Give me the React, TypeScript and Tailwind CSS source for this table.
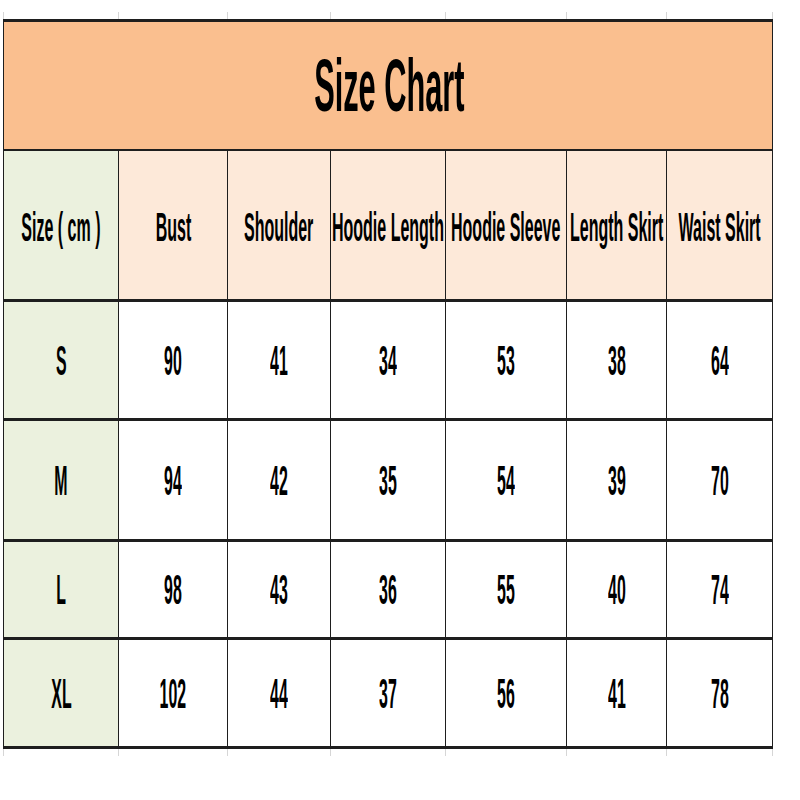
import React from "react";

const cols = "grid grid-cols-[115px_109px_103px_115px_121px_100px_106px]";
const font = { fontFamily: '"Liberation Sans", Arial, sans-serif' };

const headers = ["Bust", "Shoulder", "Hoodie Length", "Hoodie Sleeve", "Length Skirt", "Waist Skirt"];
const rows: { size: string; vals: string[]; h: string }[] = [
  { size: "S", vals: ["90", "41", "34", "53", "38", "64"], h: "h-[119px]" },
  { size: "M", vals: ["94", "42", "35", "54", "39", "70"], h: "h-[121px]" },
  { size: "L", vals: ["98", "43", "36", "55", "40", "74"], h: "h-[98px]" },
  { size: "XL", vals: ["102", "44", "37", "56", "41", "78"], h: "h-[109px]" },
];

function Ghost() {
  return (
    <div className={`${cols} h-[7px] ml-[3px] border-l border-[#d6d6d6] w-[770px]`}>
      {Array.from({ length: 7 }).map((_, i) => (
        <div key={i} className="border-r border-[#d6d6d6]" />
      ))}
    </div>
  );
}

function HeadText({ children }: { children: React.ReactNode }) {
  return (
    <span className="shrink-0 whitespace-nowrap inline-block text-[40px] font-bold leading-none text-black scale-x-[0.4]">
      {children}
    </span>
  );
}

function BodyText({ children }: { children: React.ReactNode }) {
  return (
    <span className="shrink-0 whitespace-nowrap inline-block text-[43px] font-bold leading-none text-black scale-x-[0.37]">
      {children}
    </span>
  );
}

export default function App() {
  return (
    <div className="w-[800px] h-[800px] bg-white pt-[12px]" style={font}>
      <Ghost />
      <div className="ml-[3px] w-[770px] border-l border-t-[3px] border-[#1e1e1e]">
        <div className="h-[129px] bg-[#FABF8F] border-r border-b-2 border-[#1e1e1e] flex items-center justify-center">
          <span className="shrink-0 whitespace-nowrap inline-block text-[75px] font-bold leading-none text-black scale-x-[0.41] translate-x-[1px]">
            Size Chart
          </span>
        </div>
        <div className={`${cols} h-[151px] border-b-[3px] border-[#1e1e1e]`}>
          <div className="bg-[#EBF1DE] border-r border-[#1e1e1e] flex items-center justify-center pt-[4px]">
            <HeadText>Size ( cm )</HeadText>
          </div>
          {headers.map((h) => (
            <div key={h} className="bg-[#FDE9D9] border-r border-[#1e1e1e] flex items-center justify-center pt-[4px]">
              <HeadText>{h}</HeadText>
            </div>
          ))}
        </div>
        {rows.map((r) => (
          <div key={r.size} className={`${cols} ${r.h} border-b-[3px] border-[#1e1e1e]`}>
            <div className="bg-[#EBF1DE] border-r border-[#1e1e1e] flex items-center justify-center">
              <BodyText>{r.size}</BodyText>
            </div>
            {r.vals.map((v, i) => (
              <div key={i} className="bg-white border-r border-[#1e1e1e] flex items-center justify-center">
                <BodyText>{v}</BodyText>
              </div>
            ))}
          </div>
        ))}
      </div>
      <Ghost />
    </div>
  );
}
